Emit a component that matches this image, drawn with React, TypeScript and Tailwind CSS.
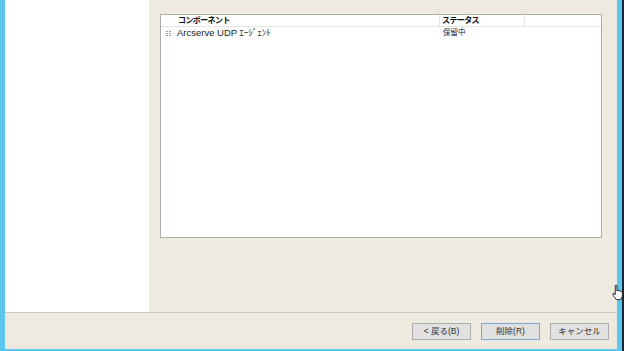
import React from "react";

const jp = { fontFamily: '"Liberation Sans", "Noto Sans CJK JP", sans-serif' };

function Btn({ label, focused }: { label: string; focused?: boolean }) {
  return (
    <div
      className={
        "w-[59px] h-[17px] flex items-center justify-center bg-[#e1e1e1] border text-[8.5px] text-[#333] leading-none " +
        (focused ? "border-[#7aa7d6]" : "border-[#acacac]")
      }
    >
      {label}
    </div>
  );
}

export default function App() {
  return (
    <div className="relative w-[624px] h-[351px] flex overflow-hidden" style={jp}>
      <div className="w-[5px] h-full bg-[#5cc6ee]" />
      <div className="w-[612px] h-full flex flex-col">
        <div className="h-[312px] flex">
          <div className="w-[144px] h-full bg-white" />
          <div className="flex-1 h-full bg-[#eeeadf] pl-[11px] pt-[14px]">
            <div className="w-[442px] h-[224px] bg-white border border-[#aeaca4] flex flex-col">
              <div className="h-[12px] flex border-b border-[#e6e6e6] text-[8px] font-bold text-[#111] leading-none">
                <div className="w-[279px] border-r border-[#e6e6e6] pl-[17px] flex items-center tracking-[-0.6px]">
                  コンポーネント
                </div>
                <div className="w-[85px] border-r border-[#e6e6e6] pl-[2px] flex items-center tracking-[-0.6px]">
                  ステータス
                </div>
                <div className="flex-1" />
              </div>
              <div className="h-[12px] flex items-center text-[#222] leading-none">
                <div className="w-[279px] flex items-center pl-[5px]">
                  <svg width="6" height="5" viewBox="0 0 6 5" className="mr-[5px]">
                    <rect x="0" y="0" width="2" height="1" fill="#9a9a9a" />
                    <rect x="0" y="2" width="2" height="1" fill="#9a9a9a" />
                    <rect x="0" y="4" width="2" height="1" fill="#9a9a9a" />
                    <rect x="3" y="0" width="2" height="1" fill="#9a9a9a" />
                    <rect x="3" y="2" width="2" height="1" fill="#9a9a9a" />
                    <rect x="3" y="4" width="2" height="1" fill="#9a9a9a" />
                  </svg>
                  <span className="text-[9.5px]">Arcserve UDP </span>
                  <span className="text-[9px] ml-[2px]">ｴｰｼﾞｪﾝﾄ</span>
                </div>
                <div className="pl-[3px] text-[7.5px]">保留中</div>
              </div>
            </div>
          </div>
        </div>
        <div className="h-[1px] bg-[#c9c6bd]" />
        <div className="h-[36px] bg-[#eeeadf] flex justify-end items-start pt-[10px] pr-[8px] gap-[10px]">
          <Btn label="< 戻る(B)" />
          <Btn label="削除(R)" focused />
          <Btn label="キャンセル" />
        </div>
        <div className="h-[2px] bg-[#5cc6ee]" />
      </div>
      <div className="w-[5px] h-full bg-[#5cc6ee]" />
      <div className="w-[2px] h-full bg-[#1b2633]" />
      <svg
        className="absolute left-[612px] top-[284px]"
        width="12"
        height="17"
        viewBox="0 0 11 15"
      >
        <path
          d="M3 1 L4.5 1 L4.5 6 L5.5 5.5 L7 5.8 L8.5 6.5 L9.5 7.5 L9.5 11 L8 14 L4 14 L1 10 L1 8.5 L2.2 8.5 L3 9.5 Z"
          fill="#ffffff"
          stroke="#111"
          strokeWidth="0.8"
        />
      </svg>
    </div>
  );
}
